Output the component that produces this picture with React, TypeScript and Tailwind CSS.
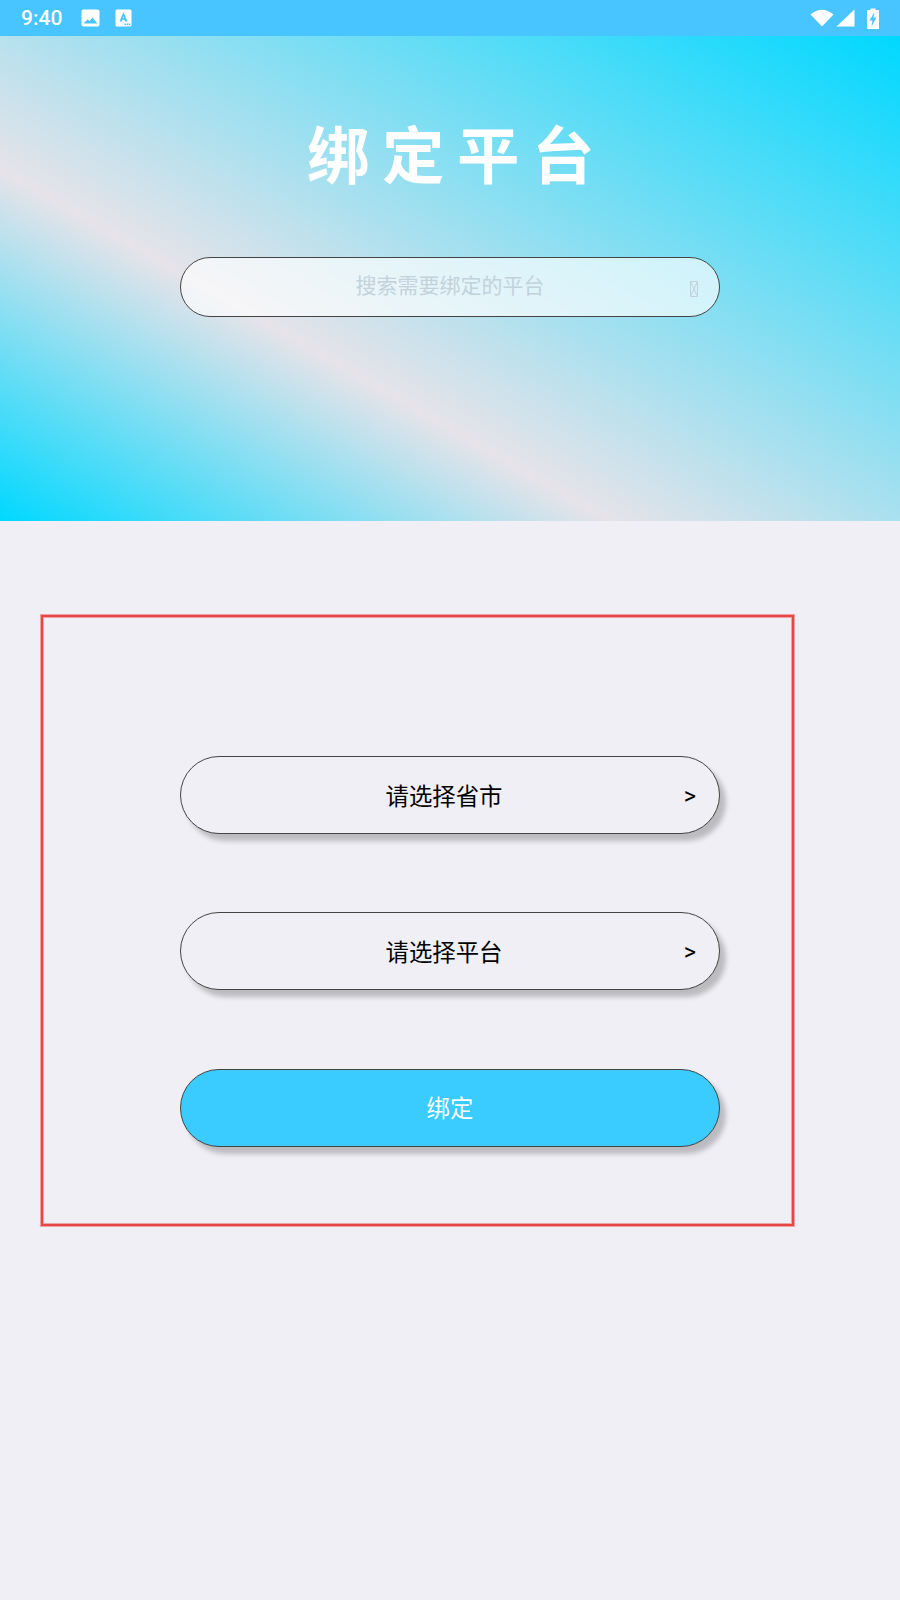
const cjk = { fontFamily: '"Noto Sans CJK SC", "Noto Sans", sans-serif' };

function Field({ label }: { label: string }) {
  return (
    <div className="relative flex h-[78px] w-[540px] items-center justify-center rounded-[39px] border border-[#444] bg-[#f0eff5] text-[23.4px] text-black shadow-[6px_7px_5px_rgba(0,0,0,0.22)]" style={cjk}>
      <span className="pr-[12px] pt-[1px]">{label}</span>
      <span className="absolute right-[23px] top-[23px] text-[23.4px] leading-[32px]" style={{ fontFamily: '"Roboto", sans-serif' }}>&gt;</span>
    </div>
  );
}

export default function App() {
  return (
    <div className="flex h-[1600px] w-[900px] flex-col overflow-hidden bg-[#f0eff5]">
      <div className="flex h-[36px] shrink-0 items-center bg-[#48c4ff] text-white">
        <span className="ml-[21px] text-[21px] font-medium leading-none" style={{ fontFamily: 'Roboto, sans-serif' }}>9:40</span>
        <svg className="ml-[19px]" width="19" height="18" viewBox="0 0 19 18">
          <rect x="0.5" y="0.5" width="18" height="17" rx="2" fill="#fff" />
          <path d="M2.5 14.5 L6.5 10.5 L8.5 12 L11.5 8.5 L16.5 14.5 Z" fill="#48c4ff" />
        </svg>
        <svg className="ml-[15px]" width="17" height="18" viewBox="0 0 17 18">
          <rect x="0.5" y="0.5" width="16" height="17" rx="1.5" fill="#fff" />
          <path d="M8.5 3 L12.5 12.5 H10.2 L9.6 10.8 H7.4 L6.8 12.5 H4.5 Z M8 9 H9 L8.5 7 Z" fill="#48c4ff" fillRule="evenodd" />
          <rect x="9.5" y="14.5" width="1.5" height="1.5" fill="#48c4ff" />
          <rect x="11.7" y="14.5" width="1.5" height="1.5" fill="#48c4ff" />
          <rect x="13.9" y="14.5" width="1.5" height="1.5" fill="#48c4ff" />
        </svg>
        <div className="ml-auto mr-[21px] flex items-center">
          <svg width="24" height="18" viewBox="0 0 24 18">
            <path d="M0.5 5.5 Q12 -4 23.5 5.5 L12 17.5 Z" fill="#fff" />
          </svg>
          <svg className="ml-[2px]" width="19" height="18" viewBox="0 0 19 18">
            <path d="M0.5 17.5 L18.5 0.5 V17.5 Z" fill="#fff" />
          </svg>
          <svg className="ml-[12px]" width="12" height="21" viewBox="0 0 12 21">
            <path d="M3.5 0.5 H8.5 V2 H12 V21 H0 V2 H3.5 Z" fill="#fff" />
            <path d="M7.5 4 L2.5 12.5 H5.5 L4.5 18.5 L9.5 9.5 H6.5 Z" fill="#48c4ff" />
          </svg>
        </div>
      </div>

      <div className="flex h-[485px] shrink-0 flex-col items-center bg-[linear-gradient(30deg,#00d8ff_0%,#e6e3e9_35%,#00d8ff_100%)]">
        <h1 className="mt-[76px] h-[80px] pl-[14px] text-[62.4px] font-bold leading-[80px] tracking-[12.6px] text-white" style={cjk}>绑定平台</h1>
        <div className="relative mt-[65px] flex h-[60px] w-[540px] items-center justify-center rounded-[30px] border border-[#444] bg-white/65 text-[21px] text-[#c2d2db]" style={cjk}>
          <span className="-mt-[4px]">搜索需要绑定的平台</span>
          <svg className="absolute right-[21px] top-[23px]" width="8" height="16" viewBox="0 0 8 16">
            <path d="M0.5 0.5 H7.5 V15.5 H0.5 Z M0.5 0.5 L7.5 15.5 M7.5 0.5 L0.5 15.5" fill="none" stroke="#c2d2db" strokeWidth="1" />
          </svg>
        </div>
      </div>

      <div className="ml-[41px] mt-[94px] flex h-[611px] w-[753px] flex-col items-start gap-[78px] border-2 border-[#e84545] pl-[137px] pt-[139px] shadow-[0_0_0_1px_rgba(232,69,69,0.45),inset_0_0_0_1px_rgba(232,69,69,0.45)]">
        <Field label="请选择省市" />
        <Field label="请选择平台" />
        <div className="mt-[1px] flex h-[78px] w-[540px] items-center justify-center rounded-[39px] border border-[#444] bg-[#3acbff] text-[23.4px] text-white shadow-[6px_7px_5px_rgba(0,0,0,0.22)]" style={cjk}>绑定</div>
      </div>
    </div>
  );
}
